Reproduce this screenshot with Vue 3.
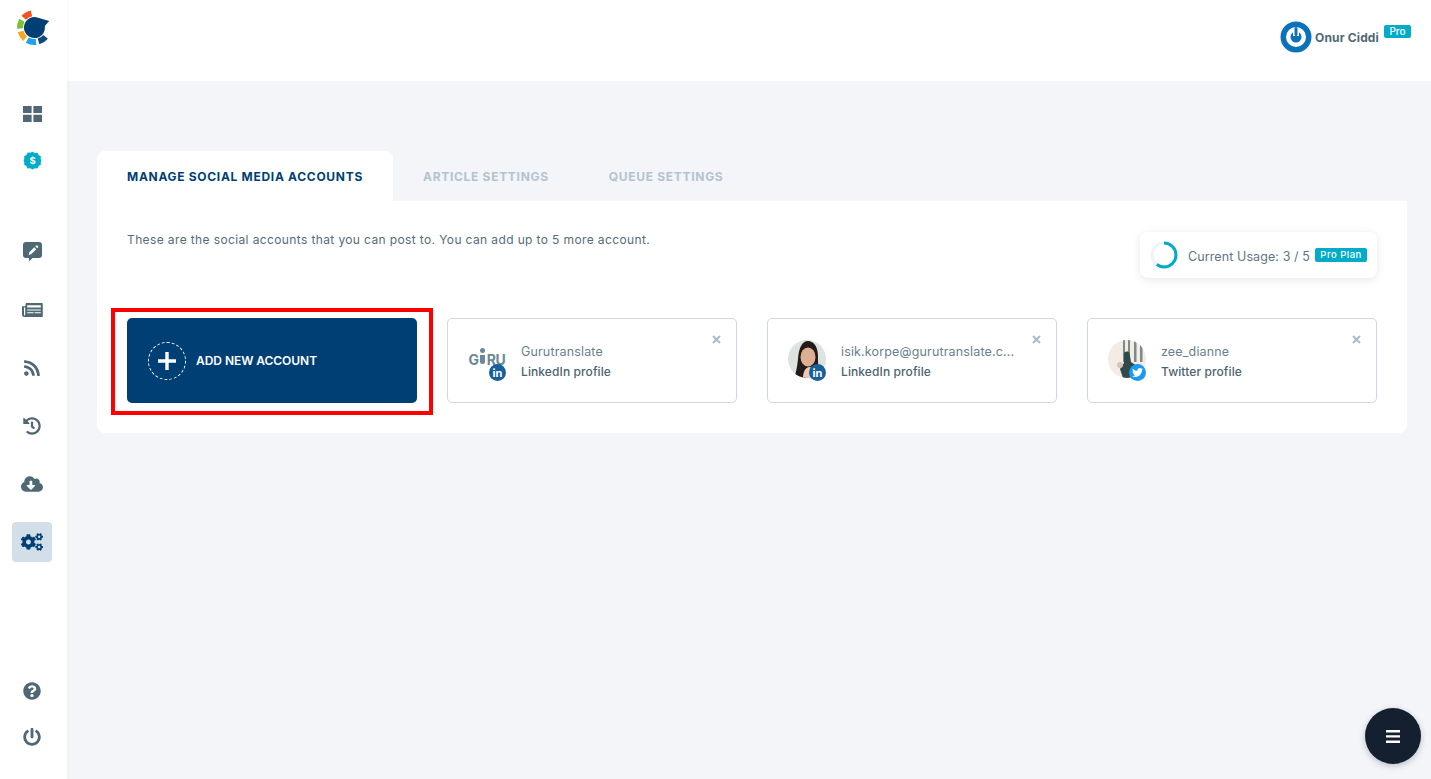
<script setup>
const paths = {
  rss: 'M128.081 415.959c0 35.369-28.672 64.041-64.041 64.041S0 451.328 0 415.959s28.672-64.041 64.041-64.041 64.04 28.673 64.04 64.041zm175.66 47.25c-8.354-154.6-132.185-278.587-286.95-286.95C7.656 175.765 0 183.105 0 192.253v48.069c0 8.415 6.49 15.472 14.887 16.018 111.832 7.284 201.473 96.702 208.772 208.772.547 8.397 7.604 14.887 16.018 14.887h48.069c9.149.001 16.489-7.655 15.995-16.79zm144.249.288C439.596 229.677 251.465 40.445 16.503 32.01 7.473 31.686 0 38.981 0 48.016v48.068c0 8.625 6.835 15.645 15.453 15.999 191.179 7.839 344.627 161.316 352.465 352.465.353 8.618 7.373 15.453 15.999 15.453h48.068c9.034-.001 16.329-7.474 16.005-16.504z',
  history: 'M504 255.531c.253 136.64-111.18 248.372-247.82 248.468-59.015.042-113.223-20.53-155.822-54.911-11.077-8.94-11.905-25.541-1.839-35.607l11.267-11.267c8.609-8.609 22.353-9.551 31.891-1.984C173.062 425.135 212.781 440 256 440c101.705 0 184-82.311 184-184 0-101.705-82.311-184-184-184-48.814 0-93.149 18.969-126.068 49.932l50.754 50.754c10.08 10.08 2.941 27.314-11.313 27.314H24c-8.837 0-16-7.163-16-16V38.627c0-14.254 17.234-21.393 27.314-11.314l49.372 49.372C129.209 34.136 189.552 8 256 8c136.81 0 247.747 110.78 248 247.531zm-180.912 78.784l9.823-12.63c8.138-10.463 6.253-25.542-4.21-33.679L288 256.349V152c0-13.255-10.745-24-24-24h-16c-13.255 0-24 10.745-24 24v135.651l65.409 50.874c10.463 8.137 25.541 6.253 33.679-4.21z',
  cloud: 'M537.6 226.6c4.1-10.7 6.4-22.4 6.4-34.6 0-53-43-96-96-96-19.7 0-38.1 6-53.3 16.2C367 64.2 315.3 32 256 32c-88.4 0-160 71.6-160 160 0 2.7.1 5.4.2 8.1C40.2 219.8 0 273.2 0 336c0 79.5 64.5 144 144 144h368c70.7 0 128-57.3 128-128 0-61.9-44-113.6-102.4-125.4zm-132.9 88.7L299.3 420.7c-6.2 6.2-16.4 6.2-22.6 0L171.3 315.3c-10.1-10.1-2.9-27.3 11.3-27.3H248V176c0-8.8 7.2-16 16-16h48c8.8 0 16 7.2 16 16v112h65.4c14.2 0 21.4 17.2 11.3 27.3z',
  cogs: 'M512.1 191l-8.2 14.3c-3 5.3-9.4 7.5-15.1 5.4-11.8-4.4-22.6-10.7-32.1-18.6-4.6-3.8-5.8-10.5-2.8-15.7l8.2-14.3c-6.9-8-12.3-17.3-15.9-27.4h-16.5c-6 0-11.2-4.3-12.2-10.3-2-12-2.1-24.6 0-37.1 1-6 6.2-10.4 12.2-10.4h16.5c3.6-10.1 9-19.4 15.9-27.4l-8.2-14.3c-3-5.2-1.9-11.9 2.8-15.7 9.5-7.9 20.4-14.2 32.1-18.6 5.7-2.1 12.1.1 15.1 5.4l8.2 14.3c10.5-1.9 21.2-1.9 31.7 0L552 6.3c3-5.3 9.4-7.5 15.1-5.4 11.8 4.4 22.6 10.7 32.1 18.6 4.6 3.8 5.8 10.5 2.8 15.7l-8.2 14.3c6.9 8 12.3 17.3 15.9 27.4h16.5c6 0 11.2 4.3 12.2 10.3 2 12 2.1 24.6 0 37.1-1 6-6.2 10.4-12.2 10.4h-16.5c-3.6 10.1-9 19.4-15.9 27.4l8.2 14.3c3 5.2 1.9 11.9-2.8 15.7-9.5 7.9-20.4 14.2-32.1 18.6-5.7 2.1-12.1-.1-15.1-5.4l-8.2-14.3c-10.4 1.9-21.2 1.9-31.7 0zm-10.5-58.8c38.5 29.6 82.4-14.3 52.8-52.8-38.5-29.7-82.4 14.3-52.8 52.8zM386.3 286.1l33.7 16.8c10.1 5.8 14.5 18.1 10.5 29.1-8.9 24.2-26.4 46.4-42.6 65.8-7.4 8.9-20.2 11.1-30.3 5.3l-29.1-16.8c-16 13.7-34.6 24.6-54.9 31.7v33.6c0 11.6-8.3 21.6-19.7 23.6-24.6 4.2-50.4 4.4-75.9 0-11.5-2-20-11.9-20-23.6V418c-20.3-7.2-38.9-18-54.9-31.7L74 403c-10 5.8-22.9 3.6-30.3-5.3-16.2-19.4-33.3-41.6-42.2-65.7-4-10.9.4-23.2 10.5-29.1l33.3-16.8c-3.9-20.9-3.9-42.4 0-63.4L12 205.8c-10.1-5.8-14.6-18.1-10.5-29 8.9-24.2 26-46.4 42.2-65.8 7.4-8.9 20.2-11.1 30.3-5.3l29.1 16.8c16-13.7 34.6-24.6 54.9-31.7V57.1c0-11.5 8.2-21.5 19.6-23.5 24.6-4.2 50.5-4.4 76-.1 11.5 2 20 11.9 20 23.6v33.6c20.3 7.2 38.9 18 54.9 31.7l29.1-16.8c10-5.8 22.9-3.6 30.3 5.3 16.2 19.4 33.2 41.6 42.1 65.8 4 10.9.1 23.2-10 29.1l-33.7 16.8c3.9 21 3.9 42.5 0 63.5zm-117.6 21.1c59.2-77-28.7-164.9-105.7-105.7-59.2 77 28.7 164.9 105.7 105.7zm243.4 182.7l-8.2 14.3c-3 5.3-9.4 7.5-15.1 5.4-11.8-4.4-22.6-10.7-32.1-18.6-4.6-3.8-5.8-10.5-2.8-15.7l8.2-14.3c-6.9-8-12.3-17.3-15.9-27.4h-16.5c-6 0-11.2-4.3-12.2-10.3-2-12-2.1-24.6 0-37.1 1-6 6.2-10.4 12.2-10.4h16.5c3.6-10.1 9-19.4 15.9-27.4l-8.2-14.3c-3-5.2-1.9-11.9 2.8-15.7 9.5-7.9 20.4-14.2 32.1-18.6 5.7-2.1 12.1.1 15.1 5.4l8.2 14.3c10.5-1.9 21.2-1.9 31.7 0l8.2-14.3c3-5.3 9.4-7.5 15.1-5.4 11.8 4.4 22.6 10.7 32.1 18.6 4.6 3.8 5.8 10.5 2.8 15.7l-8.2 14.3c6.9 8 12.3 17.3 15.9 27.4h16.5c6 0 11.2 4.3 12.2 10.3 2 12 2.1 24.6 0 37.1-1 6-6.2 10.4-12.2 10.4h-16.5c-3.6 10.1-9 19.4-15.9 27.4l8.2 14.3c3 5.2 1.9 11.9-2.8 15.7-9.5 7.9-20.4 14.2-32.1 18.6-5.7 2.1-12.1-.1-15.1-5.4l-8.2-14.3c-10.4 1.9-21.2 1.9-31.7 0zM501.6 431c38.5 29.6 82.4-14.3 52.8-52.8-38.5-29.6-82.4 14.3-52.8 52.8z',
  question: 'M504 256c0 136.997-111.043 248-248 248S8 392.997 8 256C8 119.083 119.043 8 256 8s248 111.083 248 248zM262.655 90c-54.497 0-89.255 22.957-116.549 63.758-3.536 5.286-2.353 12.415 2.715 16.258l34.699 26.31c5.205 3.947 12.621 3.008 16.665-2.122 17.864-22.658 30.113-35.797 57.303-35.797 20.429 0 45.698 13.148 45.698 32.958 0 14.976-12.363 22.667-32.534 33.976C247.128 238.528 216 254.941 216 296v4c0 6.627 5.373 12 12 12h56c6.627 0 12-5.373 12-12v-1.333c0-28.462 83.186-29.647 83.186-106.667 0-58.002-60.165-102-116.531-102zM256 338c-25.365 0-46 20.635-46 46 0 25.364 20.635 46 46 46s46-20.636 46-46c0-25.365-20.635-46-46-46z',
  power: 'M400 54.1c63 45 104 118.6 104 201.9 0 136.8-110.8 247.7-247.5 248C120 504.3 8.2 393 8 256.4 7.9 173.1 48.9 99.3 111.8 54.2c11.7-8.3 28-4.8 35 7.7L162.6 90c5.9 10.5 3.1 23.8-6.6 31-41.5 30.8-68 79.6-68 134.9-.1 92.3 74.5 168.1 168 168.1 91.6 0 168.6-74.2 168-169.1-.3-51.8-24.7-101.8-68.1-134-9.7-7.2-12.4-20.5-6.5-30.9l15.8-28.1c7-12.4 23.2-16.1 34.8-7.8zM296 264V24c0-13.3-10.7-24-24-24h-32c-13.3 0-24 10.7-24 24v240c0 13.3 10.7 24 24 24h32c13.3 0 24-10.7 24-24z',
  grid: 'M0 0h8.6v7H0zM10.4 0H19v7h-8.6zM0 8.8h8.6V16H0zM10.4 8.8H19V16h-8.6z',
  note: 'M3 0h13a3 3 0 0 1 3 3v10a3 3 0 0 1-3 3H9.5L6 19.500V16H3a3 3 0 0 1-3-3V3a3 3 0 0 1 3-3zM11.300 5.300l-5 5-.7 2.600 2.600-.7 5-5zM12.300 4.300l1.900 1.900.8-.8a.8.8 0 0 0 0-1.100l-.8-.8a.8.8 0 0 0-1.100 0z',
  news: 'M4 1h16a.8.8 0 0 1 .8.8v12.400a.8.8 0 0 1-.8.8H2.500A2.500 2.500 0 0 1 0 12.500V4.300h3.200zM2 5.500v8a1.100 1.100 0 0 0 1.200-1V5.500zM5.200 3.200v2.400h13.600V3.200zM5.200 7.400v1.100h13.600V7.400zM5.200 10.300v1h6.400v-1zM12.600 10.300v1h6.200v-1z'
}
const twitter = 'M459.37 151.716c.325 4.548.325 9.097.325 13.645 0 138.72-105.583 298.558-298.558 298.558-59.452 0-114.68-17.219-161.137-47.106 8.447.974 16.568 1.299 25.34 1.299 49.055 0 94.213-16.568 130.274-44.832-46.132-.975-84.792-31.188-98.112-72.772 6.498.974 12.995 1.624 19.818 1.624 9.421 0 18.843-1.3 27.614-3.573-48.081-9.747-84.143-51.98-84.143-102.985v-1.299c13.969 7.797 30.214 12.67 47.431 13.319-28.264-18.843-46.781-51.005-46.781-87.391 0-19.492 5.197-37.36 14.294-52.954 51.655 63.675 129.3 105.258 216.365 109.807-1.624-7.797-2.599-15.918-2.599-24.04 0-57.828 46.782-104.934 104.934-104.934 30.213 0 57.502 12.67 76.67 33.137 23.715-4.548 46.456-13.32 66.599-25.34-7.798 24.366-24.366 44.833-46.132 57.827 21.117-2.273 41.584-8.122 60.426-16.243-14.292 20.791-32.161 39.308-52.628 54.253z'

const topNav = [
  { id: 'grid', vb: '0 0 19 16', w: 19, h: 16 },
  { id: 'dollar' },
  { id: 'note', vb: '0 0 19 20', w: 19, h: 20 },
  { id: 'news', vb: '0 0 21 16', w: 21, h: 16 },
  { id: 'rss', vb: '0 0 448 512', w: 16, h: 18 },
  { id: 'history', vb: '0 0 512 512', w: 18, h: 18 },
  { id: 'cloud', vb: '0 0 640 512', w: 22, h: 18 },
  { id: 'cogs', vb: '0 0 640 512', w: 22, h: 18, active: true }
]
const bottomNav = [
  { id: 'question', vb: '0 0 512 512', w: 18, h: 18 },
  { id: 'power', vb: '0 0 512 512', w: 18, h: 18 }
]
// logo ring pieces, angles in degrees going clockwise from 3 o'clock
const logoParts = [
  { color: '#f4511e', rot: 222, len: 36 },
  { color: '#7cc034', rot: 176, len: 34 },
  { color: '#f9a825', rot: 130, len: 34 },
  { color: '#1aa3e8', rot: 84, len: 36 },
  { color: '#0c4a7d', rot: 40, len: 34 }
]
const tabs = ['Manage social media accounts', 'Article settings', 'Queue settings']
const accounts = [
  { name: 'Gurutranslate', sub: 'LinkedIn profile', pic: 'guru', net: 'in' },
  { name: 'isik.korpe@gurutranslate.c...', sub: 'LinkedIn profile', pic: 'isik', net: 'in' },
  { name: 'zee_dianne', sub: 'Twitter profile', pic: 'zee', net: 'tw' }
]
</script>

<template>
  <div class="app">
    <aside class="sidebar">
      <svg class="logo" width="36" height="36" viewBox="0 0 36 36">
        <circle
          v-for="p in logoParts"
          :key="p.color"
          cx="19.500"
          cy="17.500"
          r="14.500"
          fill="none"
          stroke-width="6"
          pathLength="360"
          :stroke="p.color"
          :stroke-dasharray="`${p.len} 360`"
          :transform="`rotate(${p.rot} 19.500 17.500)`"
        />
        <path d="M23 7.700a10.500 10.500 0 1 0 6.800 8.200l4.400-4.800z" fill="#003f73" />
      </svg>
      <nav class="nav">
        <div v-for="item in topNav" :key="item.id" class="nav-item" :class="{ active: item.active }">
          <svg v-if="item.id === 'dollar'" width="19" height="19" viewBox="0 0 20 20">
            <path fill="#00acc8" d="M10 .8l2.400 1.300 2.700-.2 1.300 2.400 2.400 1.300-.2 2.700L19.400 10l-.8 1.900.2 2.700-2.400 1.300-1.300 2.400-2.700-.2L10 19.400l-2.400-1.300-2.700.2-1.300-2.400-2.400-1.300.2-2.700L.6 10l.8-1.900-.2-2.700 2.400-1.300 1.300-2.400 2.700.2z" />
            <text x="10" y="13.700" text-anchor="middle" class="dollar">$</text>
          </svg>
          <svg v-else :width="item.w" :height="item.h" :viewBox="item.vb"><path :d="paths[item.id]" fill-rule="evenodd" /></svg>
        </div>
      </nav>
      <nav class="nav bottom">
        <div v-for="item in bottomNav" :key="item.id" class="nav-item small">
          <svg :width="item.w" :height="item.h" :viewBox="item.vb"><path :d="paths[item.id]" /></svg>
        </div>
      </nav>
    </aside>

    <div class="main">
      <header class="topbar">
        <div class="user">
          <svg width="32" height="32" viewBox="0 0 32 32">
            <circle cx="16" cy="16" r="15.500" fill="#0a72b9" />
            <circle cx="16" cy="16" r="10" fill="#fff" />
            <circle cx="16" cy="16" r="5.500" fill="#0a72b9" />
            <rect x="13" y="7" width="6" height="8" fill="#fff" />
            <rect x="14.500" y="6" width="3" height="9" rx="1.500" fill="#0a72b9" />
          </svg>
          <span class="user-name">Onur Ciddi</span>
          <span class="badge pro">Pro</span>
        </div>
      </header>

      <section class="content">
        <div class="tabs">
          <div v-for="(t, i) in tabs" :key="t" class="tab" :class="{ on: i === 0 }">{{ t }}</div>
        </div>
        <div class="panel">
          <div class="panel-head">
            <p class="intro">These are the social accounts that you can post to. You can add up to 5 more account.</p>
            <div class="usage">
              <svg width="28" height="28" viewBox="0 0 28 28">
                <circle cx="14" cy="14" r="12" fill="none" stroke="#f0f3f7" stroke-width="3" />
                <circle cx="14" cy="14" r="12" fill="none" stroke="#00acc8" stroke-width="3" stroke-dasharray="45.200 75.400" transform="rotate(-90 14 14)" />
              </svg>
              <span class="usage-text">Current Usage: 3 / 5</span>
              <span class="badge plan">Pro Plan</span>
            </div>
          </div>
          <div class="accounts">
            <div class="add-btn">
              <span class="plus">
                <svg width="18" height="18" viewBox="0 0 18 18"><path d="M7.300 0h3.400v7.300H18v3.400h-7.300V18H7.300v-7.300H0V7.300h7.300z" fill="#fff" /></svg>
              </span>
              <span>ADD NEW ACCOUNT</span>
              <div class="highlight"></div>
            </div>
            <div v-for="a in accounts" :key="a.name" class="card">
              <div class="pic">
                <div v-if="a.pic === 'guru'" class="guru"><span>G</span><i></i><span>RU</span></div>
                <svg v-else-if="a.pic === 'isik'" width="38" height="38" viewBox="0 0 38 38">
                  <clipPath id="c1"><circle cx="19" cy="19" r="19" /></clipPath>
                  <g clip-path="url(#c1)">
                    <rect width="38" height="38" fill="#dde3df" />
                    <path d="M6 38c2-5 3-10 4-19C11 6 15 1 20 1s10 5 10 15c0 6 0 10 1 14l-12 8z" fill="#241a18" />
                    <ellipse cx="20" cy="17" rx="7.500" ry="9.500" fill="#deae93" />
                    <path d="M15 38c0-6 2-10 6-11 5 0 9 3 11 11z" fill="#edc9b4" />
                  </g>
                </svg>
                <svg v-else width="38" height="38" viewBox="0 0 38 38">
                  <clipPath id="c2"><circle cx="19" cy="19" r="19" /></clipPath>
                  <g clip-path="url(#c2)">
                    <rect width="38" height="38" fill="#f2ebe6" />
                    <path d="M15 0h2v22h-2zM20 0h2v22h-2zM26 0h2.500v22H26zM32 0h2.500v22H32z" fill="#7d8b84" />
                    <path d="M16 13c1.500-2 4.500-2 5.500 0l1.500 9 6 4v12H15l-3-9 4-6z" fill="#2f4a48" />
                    <circle cx="12" cy="25" r="3" fill="#dcc2b2" />
                  </g>
                </svg>
                <span class="net" :class="a.net">
                  <template v-if="a.net === 'in'">in</template>
                  <svg v-else width="11" height="11" viewBox="0 0 512 512"><path :d="twitter" fill="#fff" /></svg>
                </span>
              </div>
              <div class="info">
                <div class="name">{{ a.name }}</div>
                <div class="sub">{{ a.sub }}</div>
              </div>
              <svg class="close" width="9" height="9" viewBox="0 0 9 9"><path d="M1 1l7 7M8 1L1 8" stroke="#a9bcc7" stroke-width="2" /></svg>
            </div>
          </div>
        </div>
      </section>
    </div>

    <button class="fab">
      <svg width="14" height="13" viewBox="0 0 14 13"><path d="M0 0h14v2.400H0zM0 5.200h14v2.400H0zM0 10.500h14v2.400H0z" fill="#fff" /></svg>
    </button>
  </div>
</template>

<style>
html, body { margin: 0; }
</style>

<style scoped>
.app {
  position: relative;
  display: flex;
  width: 100%;
  height: 779px;
  overflow: hidden;
  background: #f3f5f9;
  font-family: Inter, "Liberation Sans", sans-serif;
  color: #4d6370;
}

.sidebar {
  width: 67px;
  flex: none;
  display: flex;
  flex-direction: column;
  background: #fff;
  box-shadow: 1px 0 3px rgba(40, 60, 90, 0.04);
  padding-left: 12px;
  box-sizing: border-box;
  z-index: 2;
}
.logo { margin: 10px 0 0 3px; display: block; }
.nav { display: flex; flex-direction: column; margin-top: 48px; }
.nav.bottom { margin-top: auto; margin-bottom: 22px; gap: 6px; }
.nav-item {
  width: 40px;
  height: 40px;
  border-radius: 4px;
  display: flex;
  align-items: center;
  justify-content: center;
  margin-bottom: 18px;
  fill: #4f6873;
}
.nav-item:nth-child(1) { margin-bottom: 6px; }
.nav-item:nth-child(2) { margin-bottom: 52px; }
.nav-item.small { margin-bottom: 0; }
.nav-item.active { background: #d2dfe9; fill: #003f73; margin-bottom: 0; }
.dollar { font-size: 10px; font-weight: 700; fill: #fff; font-family: Inter, sans-serif; }

.main { flex: 1; min-width: 0; display: flex; flex-direction: column; }
.topbar {
  height: 81px;
  flex: none;
  background: #fff;
  display: flex;
  justify-content: flex-end;
  padding-right: 20px;
}
.user { display: flex; align-items: flex-start; padding-top: 21px; }
.user-name { font-size: 12px; font-weight: 700; letter-spacing: 0.15px; margin: 9px 0 0 3px; line-height: 15px; color: #4f6873; }
.badge {
  background: #00acc8;
  color: #fff;
  border-radius: 2px;
  font-weight: 500;
  text-align: center;
}
.badge.pro { font-size: 10px; line-height: 13px; width: 27px; margin: 4px 0 0 5px; }
.badge.plan { font-size: 9.500px; line-height: 14px; width: 52px; letter-spacing: 0.5px; }

.content { padding: 70px 24px 0 30px; }
.tabs { display: flex; }
.tab {
  height: 50px;
  line-height: 52px;
  padding: 0 30px;
  font-size: 12px;
  font-weight: 700;
  letter-spacing: 0.7px;
  text-transform: uppercase;
  color: #b4c4ce;
  border-radius: 8px 8px 0 0;
}
.tab.on { background: #fff; color: #003f73; }

.panel {
  background: #fff;
  border-radius: 0 0 8px 8px;
  height: 232px;
  padding: 0 30px;
  box-sizing: border-box;
}
.panel-head {
  display: flex;
  justify-content: space-between;
  align-items: flex-start;
  height: 117px;
}
.intro { margin: 31px 0 0; font-size: 12px; line-height: 16px; letter-spacing: 0.38px; color: #566c78; }
.usage {
  margin-top: 31px;
  height: 46px;
  width: 237px;
  box-sizing: border-box;
  padding-left: 10px;
  display: flex;
  align-items: center;
  border-radius: 8px;
  background: #fff;
  box-shadow: 0 2px 8px rgba(60, 80, 110, 0.13);
}
.usage-text { font-size: 12.500px; letter-spacing: 0.1px; margin: 2px 5px 0 10px; color: #5f7581; }

.accounts { display: flex; gap: 30px; }
.add-btn {
  position: relative;
  width: 290px;
  height: 85px;
  flex: none;
  box-sizing: border-box;
  padding-left: 21px;
  display: flex;
  align-items: center;
  gap: 10px;
  background: #003f73;
  border-radius: 5px;
  color: #fff;
  font-size: 12px;
  font-weight: 600;
  letter-spacing: -0.05px;
}
.plus {
  width: 38px;
  height: 38px;
  box-sizing: border-box;
  border: 1px dashed #fff;
  border-radius: 50%;
  display: flex;
  align-items: center;
  justify-content: center;
}
.highlight {
  position: absolute;
  left: -16px;
  right: -16px;
  top: -10px;
  bottom: -12px;
  border: 4px solid #f00;
}
.card {
  position: relative;
  width: 290px;
  height: 85px;
  flex: none;
  box-sizing: border-box;
  border: 1px solid #ced8de;
  border-radius: 5px;
  padding-left: 20px;
  display: flex;
  align-items: center;
  gap: 15px;
  background: #fff;
}
.pic { position: relative; width: 38px; height: 38px; flex: none; margin-top: -3px; }
.pic > svg { display: block; }
.guru {
  position: relative;
  display: flex;
  align-items: center;
  justify-content: center;
  height: 38px;
  font-size: 14px;
  font-weight: 700;
  color: #6d8796;
  letter-spacing: -0.3px;
}
.guru i { position: relative; width: 5px; height: 9px; background: #6d8796; border-radius: 0 0 3px 3px; margin: 0 1.500px; }
.guru i::before {
  content: '';
  position: absolute;
  left: 0;
  top: -7px;
  width: 5px;
  height: 5px;
  border-radius: 50%;
  background: #6d8796;
}
.net {
  position: absolute;
  right: 0;
  bottom: -3px;
  width: 17px;
  height: 17px;
  border-radius: 50%;
  display: flex;
  align-items: center;
  justify-content: center;
  color: #fff;
  font-size: 11px;
  font-weight: 700;
  letter-spacing: 0;
}
.net.in { background: #17609c; }
.net.tw { background: #1a99f0; }
.info { min-width: 0; padding-top: 2px; }
.name {
  font-size: 12.500px;
  line-height: 16px;
  letter-spacing: 0.15px;
  color: #6b7f8a;
  white-space: nowrap;
  margin-bottom: 4px;
}
.sub { font-size: 12px; line-height: 16px; letter-spacing: 0.1px; font-weight: 500; color: #4d6370; }
.close { position: absolute; right: 15.500px; top: 16px; }

.fab {
  position: absolute;
  right: 10px;
  bottom: 15px;
  width: 56px;
  height: 56px;
  padding: 0;
  border: 0;
  border-radius: 50%;
  background: #14202f;
  box-shadow: 0 2px 6px rgba(20, 32, 47, 0.25);
  display: flex;
  align-items: center;
  justify-content: center;
}
</style>
